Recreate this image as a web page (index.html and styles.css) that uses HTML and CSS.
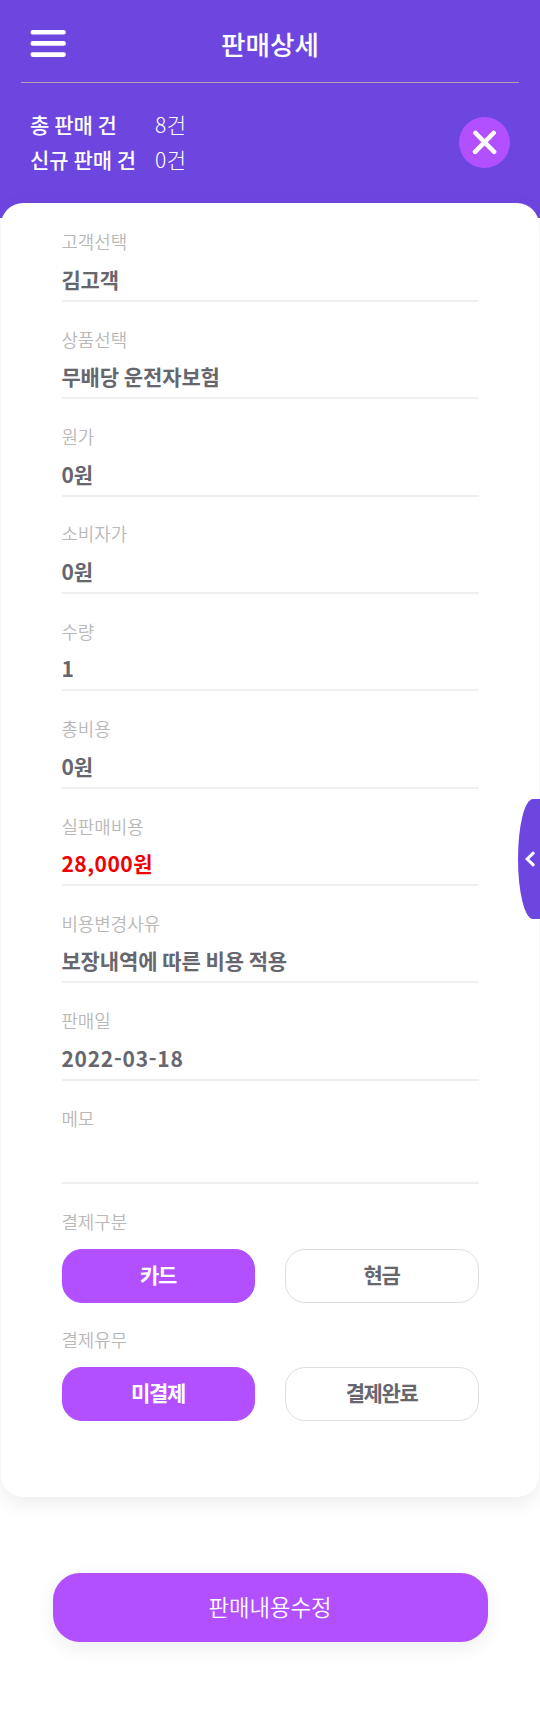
FILE: index.html
```html
<!DOCTYPE html>
<html lang="ko">
<head>
  <meta charset="UTF-8">
  <meta name="viewport" content="width=device-width, initial-scale=1.0">
  <title>판매상세</title>
  <link rel="stylesheet" href="styles.css">
</head>
<body>

  <!-- 상단 -->
  <header class="header">
    <div class="top-bar">
      <button class="menu-btn" type="button" aria-label="메뉴">
        <svg width="36" height="28" viewBox="0 0 36 28">
          <path d="M2.8 2.3H33.6M2.8 13.4H33.6M2.8 24.6H33.6" />
        </svg>
      </button>
      <h1 class="title">판매상세</h1>
    </div>
    <div class="summary">
      <dl class="counts">
        <dt>총 판매 건</dt><dd>8건</dd>
        <dt>신규 판매 건</dt><dd>0건</dd>
      </dl>
      <button class="close-btn" type="button" aria-label="닫기">
        <svg width="25" height="25" viewBox="0 0 25 25">
          <path d="M3.5 3L22.1 21.8M21.6 3L3.1 21.8" />
        </svg>
      </button>
    </div>
  </header>

  <!-- 판매 내용 -->
  <main class="card">
    <div class="field"><div class="label">고객선택</div><div class="value">김고객</div></div>
    <div class="field"><div class="label">상품선택</div><div class="value">무배당 운전자보험</div></div>
    <div class="field"><div class="label">원가</div><div class="value">0원</div></div>
    <div class="field"><div class="label">소비자가</div><div class="value">0원</div></div>
    <div class="field"><div class="label">수량</div><div class="value">1</div></div>
    <div class="field"><div class="label">총비용</div><div class="value">0원</div></div>
    <div class="field"><div class="label">실판매비용</div><div class="value red"><span class="num">28,000</span>원</div></div>
    <div class="field"><div class="label">비용변경사유</div><div class="value">보장내역에 따른 비용 적용</div></div>
    <div class="field"><div class="label">판매일</div><div class="value date">2022-03-18</div></div>
    <div class="field memo"><div class="label">메모</div></div>

    <div class="choice">
      <div class="label">결제구분</div>
      <div class="options">
        <button class="option on" type="button">카드</button>
        <button class="option" type="button">현금</button>
      </div>
    </div>
    <div class="choice">
      <div class="label">결제유무</div>
      <div class="options">
        <button class="option on" type="button">미결제</button>
        <button class="option" type="button">결제완료</button>
      </div>
    </div>
  </main>

  <button class="submit" type="button">판매내용수정</button>

  <!-- 오른쪽 탭 -->
  <button class="side-tab" type="button" aria-label="열기">
    <svg width="10" height="16" viewBox="0 0 10 16">
      <path d="M8.2 2.2L2.2 8L8.2 13.8" />
    </svg>
  </button>

</body>
</html>
```

FILE: styles.css
```css
:root {
  --main: #6d46e0;
  --point: #b250ff;
  --text: #66666e;
  --label: #b8b8b8;
  --line: #efefef;
}

* {
  box-sizing: border-box;
}

body {
  position: relative;
  margin: 0;
  min-height: 1717px;
  background: #fff;
  color: var(--text);
  font-family: "Noto Sans CJK KR", "Noto Sans", sans-serif;
}

button {
  padding: 0;
  border: none;
  background: none;
  font-family: inherit;
  cursor: pointer;
}

svg {
  display: block;
  fill: none;
  stroke: #fff;
  stroke-width: 4.6;
  stroke-linecap: round;
}

.header {
  height: 218px;
  padding: 0 21px;
  background: var(--main);
  color: #fff;
}

.top-bar {
  display: grid;
  grid-template-columns: 36px 1fr 36px;
  align-items: center;
  height: 83px;
  padding: 5px 9px 0;
  border-bottom: 1px solid #aea6b4;
}

.title {
  margin: 0;
  font-size: 26.6px;
  font-weight: 500;
  line-height: 40px;
  text-align: center;
}

.summary {
  display: flex;
  justify-content: space-between;
  padding: 24px 9px 0;
}

.counts {
  display: grid;
  grid-template-columns: 125px auto;
  margin: 0;
  font-size: 21px;
  line-height: 35px;
}

.counts dt {
  font-weight: 500;
  letter-spacing: -0.1px;
  word-spacing: -0.8px;
}

.counts dd {
  margin: 0;
  font-weight: 300;
  letter-spacing: 0.6px;
}

.close-btn {
  display: flex;
  align-items: center;
  justify-content: center;
  width: 51px;
  height: 51px;
  margin-top: 10px;
  border-radius: 50%;
  background: var(--point);
}

.card {
  position: relative;
  height: 1294px;
  margin: -15px 1px 0;
  padding: 1.6px 60px 0 61px;
  border-radius: 22px;
  background: #fff;
  box-shadow: 0 6px 20px rgba(0, 0, 0, 0.08);
}

.field {
  height: 97.36px;
  padding-top: 25.8px;
  border-bottom: 2px solid var(--line);
}

.memo {
  height: 103px;
}

.label {
  margin-left: -0.6px;
  color: var(--label);
  font-size: 17.9px;
  font-weight: 350;
  line-height: 22px;
}

.value {
  margin: 11.4px 0 0 -0.6px;
  font-size: 21px;
  font-weight: 700;
  letter-spacing: -0.13px;
  word-spacing: -0.9px;
  line-height: 30px;
}

.num {
  letter-spacing: 0.5px;
}

.date {
  letter-spacing: 0.75px;
}

.red {
  color: #f00000;
}

.choice {
  height: 118px;
  padding-top: 26.5px;
}

.options {
  display: grid;
  grid-template-columns: 193px 1fr;
  gap: 30px;
  margin-top: 16.5px;
}

.option {
  height: 54px;
  padding: 0 1px 3px 0;
  border: 1px solid #dedede;
  border-radius: 20px;
  color: var(--text);
  font-size: 21px;
  font-weight: 700;
  letter-spacing: -1.4px;
}

.option.on {
  border-color: var(--point);
  background: var(--point);
  color: #fff;
}

.submit {
  display: block;
  width: 435px;
  height: 69px;
  margin: 76px 0 0 53px;
  padding: 0 1px 4px 0;
  border-radius: 27px;
  background: var(--point);
  box-shadow: 0 6px 20px rgba(0, 0, 0, 0.07);
  color: #fff;
  font-size: 22.3px;
  font-weight: 350;
}

.side-tab {
  position: absolute;
  top: 799px;
  right: 0;
  display: flex;
  align-items: center;
  width: 22px;
  height: 120px;
  padding-left: 7px;
  border-radius: 15px 0 0 15px / 60px 0 0 60px;
  background: var(--main);
}

.side-tab svg {
  stroke-width: 3;
}
```
